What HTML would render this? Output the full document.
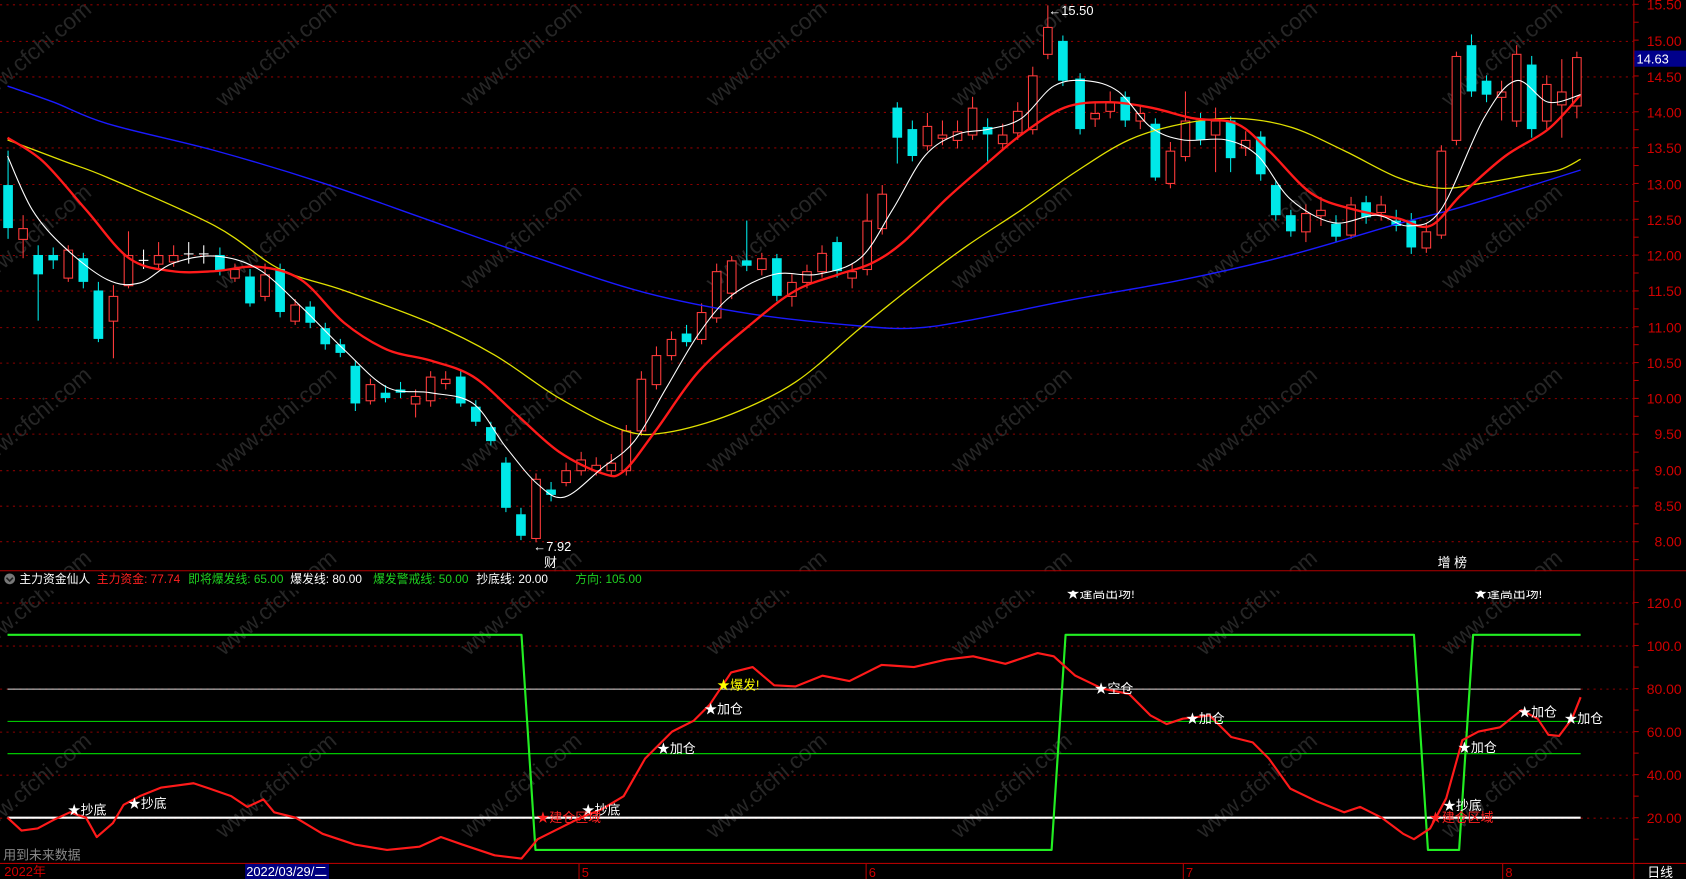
<!DOCTYPE html>
<html><head><meta charset="utf-8"><style>
html,body{margin:0;padding:0;background:#000;overflow:hidden}
svg{display:block}
text{font-family:"Liberation Sans","Noto Sans CJK SC",sans-serif}
</style></head><body>
<svg id="s" width="1686" height="879" viewBox="0 0 1568 817" preserveAspectRatio="none" xmlns="http://www.w3.org/2000/svg">
<rect width="1568" height="817" fill="#000"/>
<g id="wm" fill="#262626" font-size="21"></g>
<g id="grid" stroke="#8a0000" stroke-dasharray="2,4" stroke-width="1"></g>
<line x1="1519.5" y1="0" x2="1519.5" y2="817" stroke="#b00000"/>
<line x1="0" y1="802.5" x2="1568" y2="802.5" stroke="#b00000"/>
<g id="ticks" stroke="#b00000"></g>
<g fill="#d00000" font-size="13" text-anchor="end">
<text x="1564" y="9">15.50</text><text x="1564" y="43">15.00</text><text x="1564" y="76">14.50</text><text x="1564" y="109">14.00</text><text x="1564" y="142">13.50</text><text x="1564" y="176">13.00</text><text x="1564" y="209">12.50</text><text x="1564" y="242">12.00</text><text x="1564" y="275">11.50</text><text x="1564" y="309">11.00</text><text x="1564" y="342">10.50</text><text x="1564" y="375">10.00</text><text x="1564" y="408">9.50</text><text x="1564" y="442">9.00</text><text x="1564" y="475">8.50</text><text x="1564" y="508">8.00</text>
<text x="1564" y="565">120.0</text><text x="1564" y="605">100.0</text><text x="1564" y="645">80.00</text><text x="1564" y="685">60.00</text><text x="1564" y="725">40.00</text><text x="1564" y="765">20.00</text>
</g>
<rect x="1520" y="47" width="48" height="15" fill="#00008b"/>
<text x="1522" y="59" fill="#fff" font-size="12">14.63</text>
<g id="candles"></g>
<g id="mas" fill="none"></g>
<text x="496" y="512" fill="#fff" font-size="12">←7.92</text>
<text x="975" y="14" fill="#fff" font-size="12">←15.50</text>
<text x="506" y="527" fill="#fff" font-size="12">财</text>
<text x="1337" y="527" fill="#fff" font-size="12">增 榜</text>
<g id="ind"></g>
<g font-size="12" fill="#fff">
<text x="63" y="757">★抄底</text><text x="119" y="751">★抄底</text><text x="541" y="757">★抄底</text><text x="1342" y="753">★抄底</text>
<text x="611" y="700">★加仓</text><text x="655" y="663">★加仓</text><text x="1103" y="672">★加仓</text><text x="1356" y="699">★加仓</text><text x="1412" y="666">★加仓</text><text x="1455" y="672">★加仓</text>
<text x="1018" y="644">★空仓</text>
<text x="992" y="556">★逢高出场!</text><text x="1371" y="556">★逢高出场!</text>
<text x="667" y="641" fill="#ffff00">★爆发!</text>
<text x="499" y="764" fill="#ff2020">★建仓区域</text><text x="1329" y="764" fill="#ff2020">★建仓区域</text>
</g>
<!-- header band clips top of labels -->
<rect x="0" y="531" width="1519" height="18" fill="#000"/>
<line x1="0" y1="530.5" x2="1568" y2="530.5" stroke="#b00000"/>
<circle cx="9" cy="538" r="5" fill="#777"/><path d="M6 537 L9 540 L12 537" stroke="#222" fill="none" stroke-width="1.5"/>
<g font-size="11">
<text x="18" y="542" fill="#fff">主力资金仙人</text>
<text x="90" y="542" fill="#ff2020">主力资金: 77.74</text>
<text x="175" y="542" fill="#20d020">即将爆发线: 65.00</text>
<text x="270" y="542" fill="#fff">爆发线: 80.00</text>
<text x="347" y="542" fill="#20d020">爆发警戒线: 50.00</text>
<text x="443" y="542" fill="#fff">抄底线: 20.00</text>
<text x="535" y="542" fill="#20d020">方向: 105.00</text>
</g>
<text x="3" y="799" fill="#888" font-size="12">用到未来数据</text>
<text x="4" y="814" fill="#d00000" font-size="12">2022年</text>
<rect x="228" y="803" width="78" height="14" fill="#000080"/>
<text x="229" y="814" fill="#fff" font-size="12">2022/03/29/二</text>
<g fill="#d00000" font-size="12"><text x="541" y="815">5</text><text x="808" y="815">6</text><text x="1103" y="815">7</text><text x="1400" y="815">8</text></g>
<g stroke="#b00000"><line x1="538.5" y1="803" x2="538.5" y2="817"/><line x1="805.5" y1="803" x2="805.5" y2="817"/><line x1="1100.5" y1="803" x2="1100.5" y2="817"/><line x1="1397.5" y1="803" x2="1397.5" y2="817"/></g>
<text x="1532" y="815" fill="#fff" font-size="12">日线</text>
</svg>
<script>
var NS="http://www.w3.org/2000/svg";
function el(p,t,a){var e=document.createElementNS(NS,t);for(var k in a)e.setAttribute(k,a[k]);p.appendChild(e);return e;}
var g=document.getElementById('grid');
[4,38,71,104,137,171,204,237,270,304,337,370,403,437,470,503,560,600,640,680,720,760].forEach(function(y){el(g,'line',{x1:0,y1:y+.5,x2:1519,y2:y+.5});});
var tk=document.getElementById('ticks');
for(var y=4;y<530;y+=16.65)el(tk,'line',{x1:1519,y1:y,x2:1524,y2:y});
for(var y=560;y<800;y+=20)el(tk,'line',{x1:1519,y1:y,x2:1524,y2:y});
var wm=document.getElementById('wm');
[100,270,440,610,780].forEach(function(y,r){for(var x=-20;x<1600;x+=228){var t=el(wm,'text',{x:x,y:y,transform:'rotate(-40 '+x+' '+y+')'});t.textContent='www.cfchi.com';}});
var C=[[7,172,212,0,140,222],[21,212,222,1,200,240],[35,237,255,0,228,298],[49,237,242,0,230,250],[63,232,258,1,228,262],[77,240,262,0,235,268],[91,270,315,0,262,318],[105,275,298,1,265,333],[119,237,265,1,215,268],[133,242,244,2,232,250],[147,237,245,1,225,250],[161,237,243,1,228,248],[175,236,238,2,225,245],[189,236,238,2,228,245],[204,237,252,0,230,256],[218,250,258,1,245,262],[232,257,282,0,250,285],[246,255,275,1,245,280],[260,250,290,0,245,295],[274,283,298,1,278,302],[288,285,300,0,280,305],[302,305,320,0,300,325],[316,320,328,0,315,332],[330,340,375,0,335,382],[344,357,372,1,352,376],[358,365,370,0,358,374],[372,362,365,0,355,370],[386,368,375,1,362,388],[400,350,372,1,345,378],[414,352,356,1,345,362],[428,350,375,0,345,378],[442,378,392,0,372,396],[456,397,410,0,392,414],[470,430,472,0,425,476],[484,478,498,0,472,502],[498,445,500,1,440,504],[512,455,460,0,448,466],[526,437,448,1,430,452],[540,427,437,1,420,442],[554,432,437,1,425,442],[568,430,437,1,422,442],[582,400,437,1,395,442],[596,352,400,1,345,405],[610,330,357,1,322,362],[624,315,330,1,308,335],[638,310,318,0,302,322],[652,290,315,1,282,320],[666,252,295,1,245,300],[680,242,272,1,238,278],[694,242,247,0,205,252],[708,240,250,1,235,256],[722,240,275,0,236,280],[736,262,275,1,255,285],[750,252,262,1,246,268],[764,235,252,1,228,258],[778,225,252,0,220,258],[792,252,258,1,245,268],[806,205,250,1,180,256],[820,180,212,1,172,218],[834,100,128,0,95,152],[848,120,145,0,112,150],[862,117,135,1,105,140],[876,125,128,1,112,135],[890,122,130,1,112,138],[904,100,125,1,90,130],[918,118,125,0,110,150],[932,125,133,1,115,140],[946,103,123,1,95,130],[960,70,120,1,62,125],[974,25,50,1,5,55],[988,38,75,0,33,80],[1004,73,120,0,68,125],[1018,105,110,1,96,118],[1032,95,103,1,85,110],[1046,90,112,0,85,118],[1060,105,112,1,98,120],[1074,115,165,0,110,168],[1088,140,170,1,132,175],[1102,112,145,1,85,150],[1116,112,130,0,105,135],[1130,112,125,1,100,160],[1144,112,147,0,108,160],[1158,130,137,1,122,145],[1172,127,162,0,122,168],[1186,172,200,0,168,205],[1200,200,215,0,195,220],[1214,198,215,1,190,225],[1228,195,200,1,183,210],[1242,208,220,0,200,225],[1256,190,218,1,183,222],[1270,188,202,0,182,208],[1284,190,197,1,182,205],[1298,205,210,0,195,215],[1312,205,230,0,198,236],[1326,215,230,1,208,235],[1340,140,218,1,135,222],[1354,52,130,1,48,135],[1368,42,85,0,32,90],[1382,75,88,0,70,95],[1396,85,90,1,75,112],[1410,50,112,1,42,118],[1424,60,120,0,52,128],[1438,78,112,1,70,120],[1452,85,97,1,55,128],[1466,53,98,1,48,110]];
var cg=document.getElementById('candles');
C.forEach(function(c){var x=c[0],col=c[3]==0?'#00e8e8':(c[3]==1?'#ff3b3b':'#fff');
el(cg,'line',{x1:x+.5,y1:c[4],x2:x+.5,y2:c[5],stroke:col});
if(c[3]==0)el(cg,'rect',{x:x-4,y:c[1],width:9,height:Math.max(1,c[2]-c[1]),fill:col});
else if(c[3]==1){el(cg,'rect',{x:x-3.5,y:c[1]+.5,width:8,height:Math.max(1,c[2]-c[1]),fill:'#000',stroke:col});}
else el(cg,'line',{x1:x-4,y1:c[1],x2:x+5,y2:c[1],stroke:col});});
function pl(p,pts,col,w){el(p,'polyline',{points:pts,stroke:col,'stroke-width':w,fill:'none','stroke-linejoin':'round'});}
function sm(p,pts,col,w){var a=pts.split(' ').map(function(s){return s.split(',').map(Number);});var d='M'+a[0][0]+','+a[0][1];
for(var i=0;i<a.length-1;i++){var p0=a[i-1]||a[i],p1=a[i],p2=a[i+1],p3=a[i+2]||p2;
d+=' C'+(p1[0]+(p2[0]-p0[0])/6)+','+(p1[1]+(p2[1]-p0[1])/6)+' '+(p2[0]-(p3[0]-p1[0])/6)+','+(p2[1]-(p3[1]-p1[1])/6)+' '+p2[0]+','+p2[1];}
el(p,'path',{d:d,stroke:col,'stroke-width':w,fill:'none'});}
var m=document.getElementById('mas');
sm(m,"7,80 50,95 100,115 200,140 300,170 400,205 500,240 600,272 700,292 800,303 850,305 900,298 1000,278 1100,260 1200,237 1300,208 1350,195 1400,180 1470,158","#1a1aff",1.3);
sm(m,"7,130 60,150 100,165 200,210 260,250 320,270 400,300 460,330 520,370 580,400 620,402 680,385 740,355 800,305 850,265 900,228 950,195 1000,160 1050,130 1100,115 1150,110 1200,118 1250,140 1300,165 1340,175 1380,170 1420,163 1450,158 1470,148","#e0e000",1.2);
sm(m,"7,128 40,150 80,195 120,240 160,252 200,252 240,248 280,260 320,300 360,325 400,335 440,350 480,385 520,420 560,440 580,438 610,400 650,345 700,300 740,270 780,255 810,245 840,225 880,185 920,150 950,125 990,100 1030,95 1070,100 1110,110 1150,115 1180,140 1220,180 1260,195 1300,203 1330,210 1360,180 1400,145 1440,120 1470,88","#ff1a1a",2.2);
sm(m,"7,145 30,195 60,230 100,260 130,263 160,245 200,238 240,250 280,285 320,325 360,360 400,365 440,375 470,415 500,450 525,462 560,435 590,410 620,360 650,310 680,275 720,255 760,255 800,240 830,195 860,145 890,125 920,120 950,110 980,80 1010,75 1040,85 1070,118 1100,130 1140,130 1170,145 1200,185 1240,207 1280,200 1310,210 1340,195 1380,110 1410,75 1440,95 1470,88","#fff",1);
var ind=document.getElementById('ind');
el(ind,'line',{x1:7,y1:640.5,x2:1470,y2:640.5,stroke:'#ddd'});
el(ind,'line',{x1:7,y1:670.5,x2:1470,y2:670.5,stroke:'#00e000'});
el(ind,'line',{x1:7,y1:700.5,x2:1470,y2:700.5,stroke:'#00e000'});
el(ind,'line',{x1:7,y1:760,x2:1470,y2:760,stroke:'#fff','stroke-width':2});
pl(ind,"7,590 485,590 498,790 978,790 991,590 1315,590 1328,790 1357,790 1370,590 1470,590","#22ee22",2);
pl(ind,"7,760 20,772 35,770 50,762 65,755 80,760 90,778 105,765 115,748 130,740 150,732 165,730 180,728 195,733 215,740 230,750 245,743 255,755 275,760 300,775 330,785 360,790 390,787 410,778 430,785 460,795 485,798 500,780 520,770 540,760 560,752 580,740 600,705 625,680 645,670 660,655 680,625 700,620 720,637 740,638 765,628 790,633 820,618 850,620 880,613 905,610 935,617 965,607 980,610 1000,628 1025,640 1050,645 1070,665 1085,673 1100,668 1125,665 1145,685 1165,690 1180,705 1200,733 1225,745 1250,755 1265,750 1285,760 1305,775 1315,780 1330,770 1345,742 1360,688 1375,680 1395,676 1415,660 1430,668 1440,683 1450,684 1462,668 1470,648","#ff1a1a",2);
</script>
</body></html>
